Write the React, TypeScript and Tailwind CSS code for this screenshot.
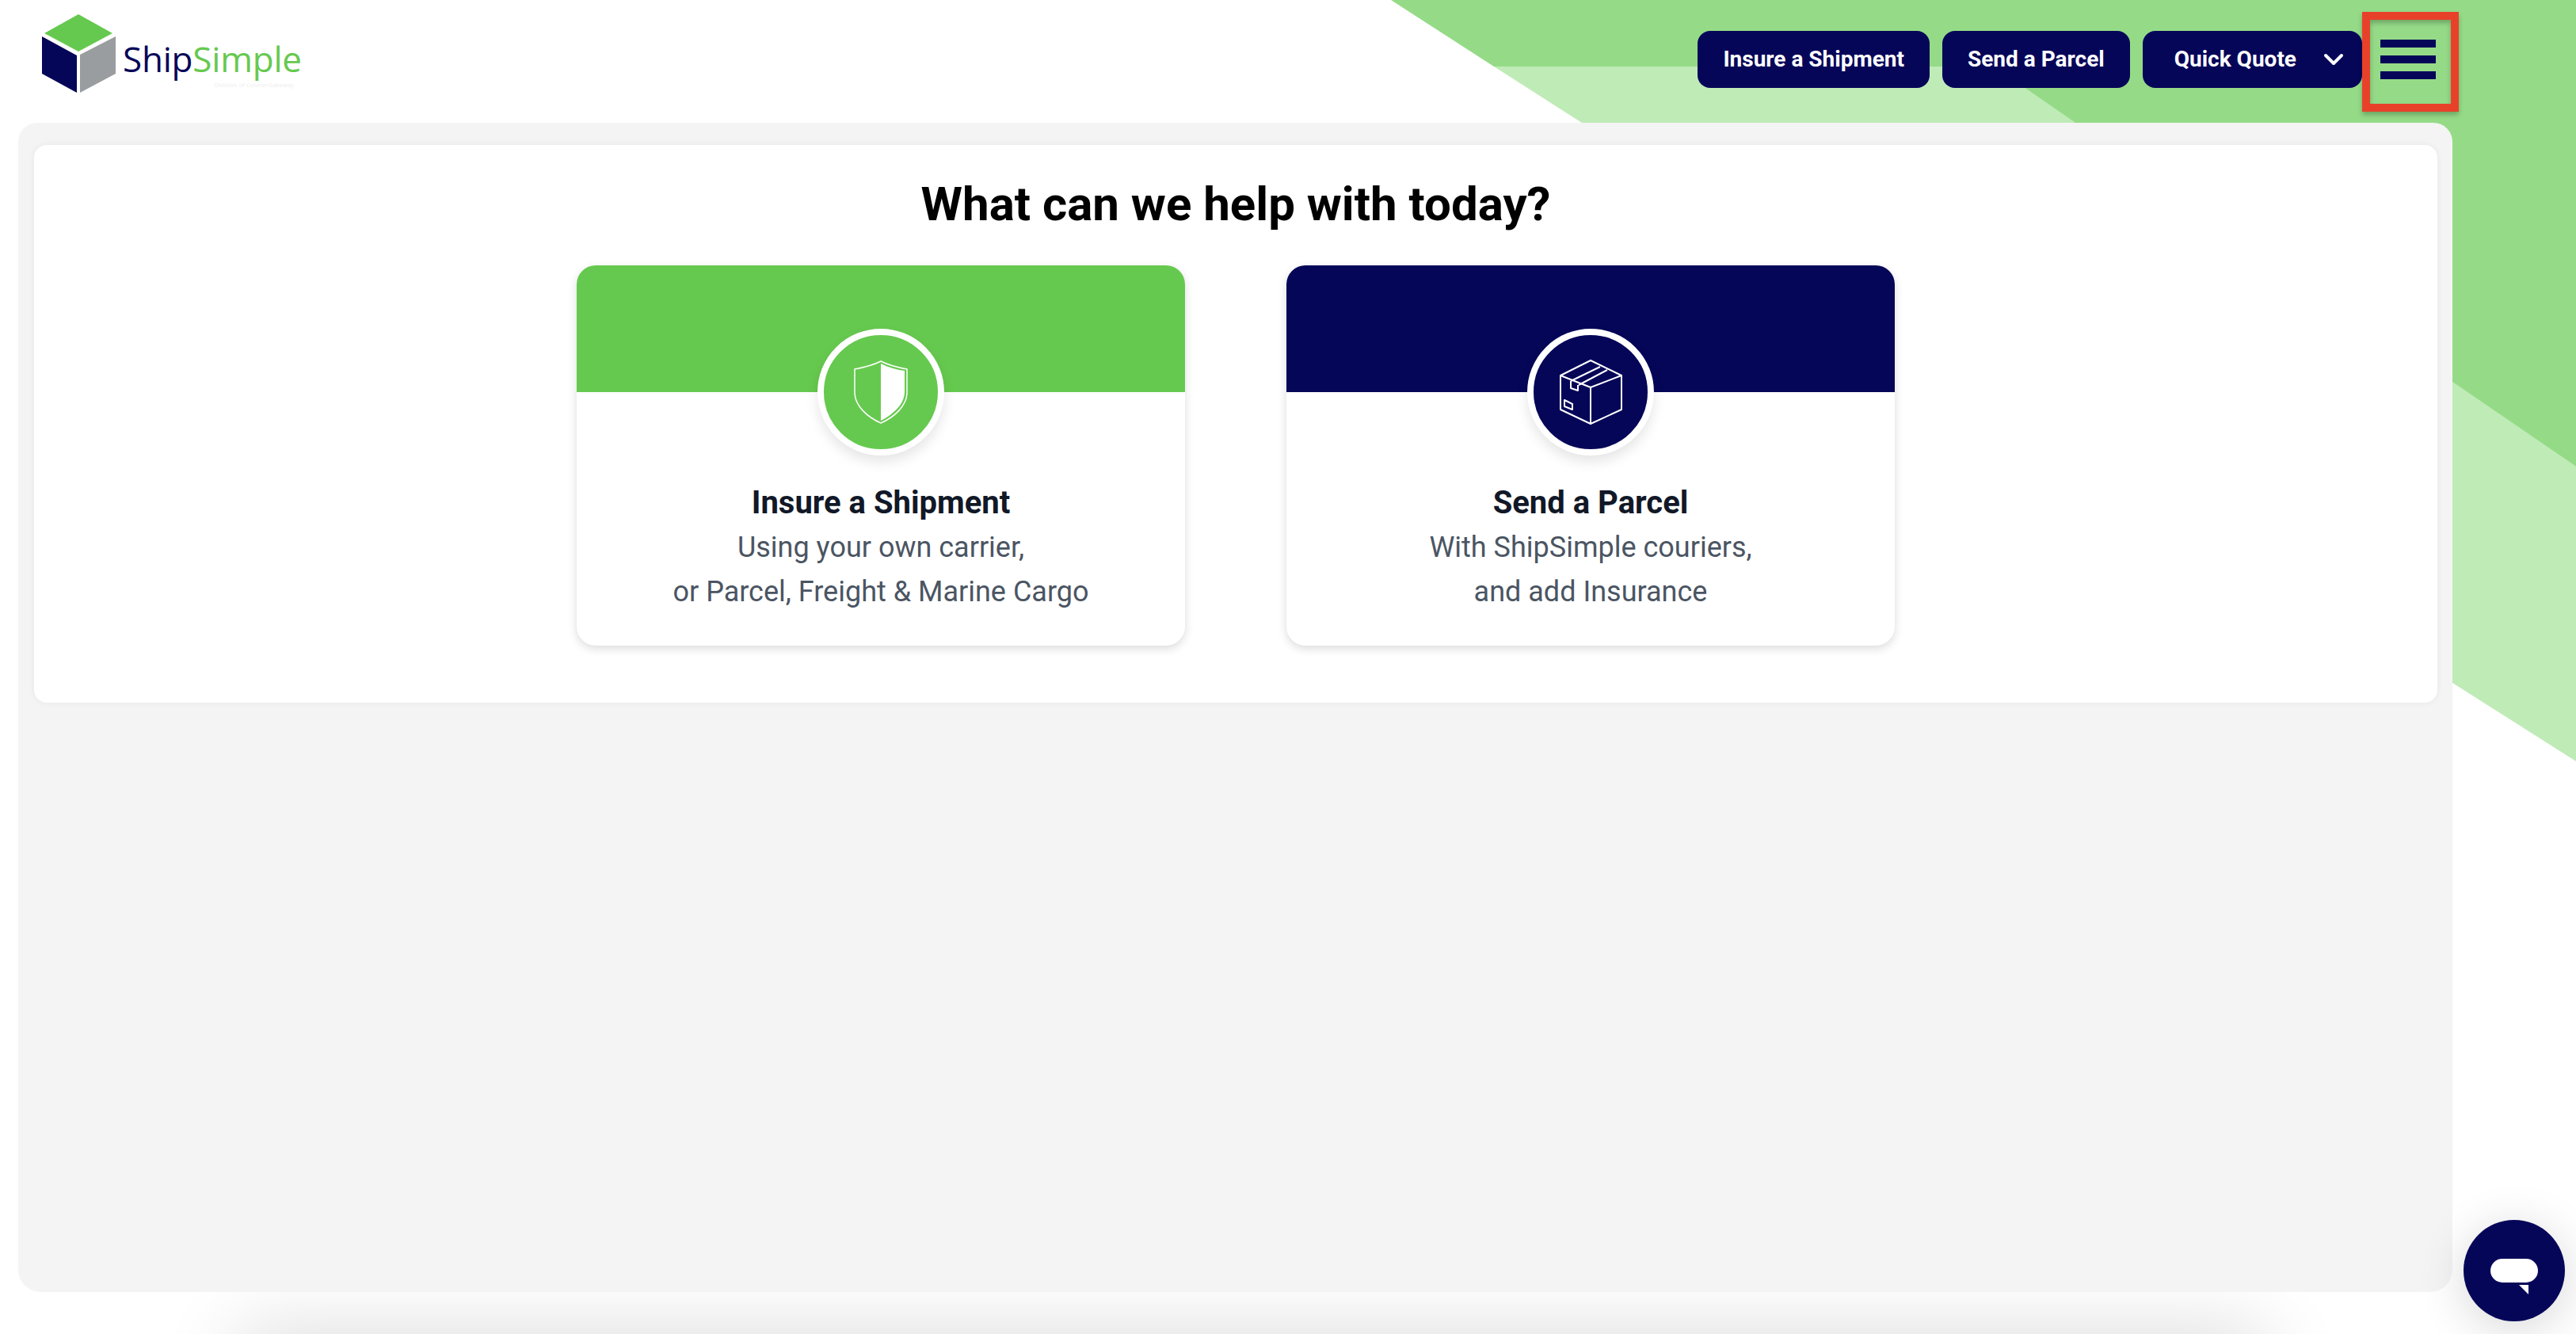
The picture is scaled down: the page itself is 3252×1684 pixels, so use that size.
import { ChevronDown } from "lucide-react";

const navy = "#060659";

function Logo() {
  return (
    <div className="relative w-[400px] h-[130px] shrink-0">
      <svg width="160" height="130" viewBox="0 0 160 130" className="absolute left-0 top-0">
        <polygon points="99,18 142,42 99,65 56,42" fill="#66c94f" />
        <polygon points="53,46 97,70 97,117 53,93" fill="#060659" />
        <polygon points="101,69 146,46 146,93 101,117" fill="#9a9da0" />
      </svg>
      <div className="absolute left-[155px] top-[46px] text-[44px] leading-[56px] font-medium font-['Open_Sans',sans-serif] tracking-[-0.2px]">
        <span className="text-[#060659]">Ship</span>
        <span className="text-[#66c94f]">Simple</span>
      </div>
      <div className="absolute left-[270px] top-[102px] text-[8px] leading-[10px] text-[#eeeeee] font-['Open_Sans',sans-serif] whitespace-nowrap">
        Division of CourierGateway
      </div>
    </div>
  );
}

function NavButton({ label }: { label: string }) {
  return (
    <button className="h-[72px] px-[32px] rounded-2xl bg-[#060659] text-white text-[28px] font-bold flex items-center whitespace-nowrap">
      {label}
    </button>
  );
}

function ShieldIcon() {
  return (
    <svg width="68" height="80" viewBox="0 0 68 80" fill="none">
      <path d="M34 1 C24 6 12 9 1 11 V40 C1 58 18 72 34 79 C50 72 67 58 67 40 V11 C56 9 44 6 34 1 Z" stroke="white" strokeWidth="1.5" />
      <path d="M34 4 C44 9 55 12 64 13 V40 C64 56 48 69 34 76 Z" fill="white" />
    </svg>
  );
}

function BoxIcon() {
  return (
    <svg width="80" height="82" viewBox="0 0 80 82" fill="none" stroke="white" strokeWidth="2" strokeLinejoin="round">
      <path d="M40 1 L79 20 V63 L40 81 L2 63 V20 Z" />
      <path d="M2 20 L40 35 L79 20" />
      <path d="M40 35 V81" />
      <path d="M15 27 L52 9 M25 32 L61 13" />
      <path d="M15 27 V36 L24 39 V32" />
      <path d="M7 51 L17 56 V63 L7 59 Z" />
    </svg>
  );
}

function OptionCard({ color, icon, title, lines }: { color: string; icon: React.ReactNode; title: string; lines: string[] }) {
  return (
    <div className="relative w-[768px] h-[480px] rounded-3xl bg-white shadow-[0_4px_12px_rgba(0,0,0,0.14)] overflow-hidden flex flex-col items-center">
      <div className="w-full h-[160px] shrink-0" style={{ backgroundColor: color }} />
      <div
        className="w-[160px] h-[160px] mt-[-80px] rounded-full border-[8px] border-white flex items-center justify-center shadow-[0_8px_16px_rgba(0,0,0,0.1)]"
        style={{ backgroundColor: color }}
      >
        {icon}
      </div>
      <h2 className="mt-[32px] text-[40px] leading-[56px] font-bold text-[#111827]">{title}</h2>
      {lines.map((l) => (
        <p key={l} className="text-[36px] leading-[56px] text-[#4b5563]">{l}</p>
      ))}
    </div>
  );
}

export default function App() {
  return (
    <div className="relative w-[3252px] h-[1684px] overflow-hidden bg-white font-['Roboto',sans-serif]">
      {/* background shapes behind everything */}
      <svg className="absolute inset-0" width="3252" height="1684" viewBox="0 0 3252 1684">
        <polygon points="1886,84 2517,84 3252,589 3252,961 3096,862 1997,155" fill="#bfebb7" />
        <polygon points="1756,0 3252,0 3252,589 3096,482 2620,155 2517,84 1886,84" fill="#95db87" />
      </svg>
      <div className="absolute left-[300px] w-[2560px] top-[1690px] h-[60px] shadow-[0_0_100px_0_rgba(0,0,0,0.2)]" />

      <div className="relative">
        <header className="h-[155px] flex items-start justify-between pr-[270px]">
          <Logo />
          <nav className="flex gap-[16px] pt-[39px]">
            <NavButton label="Insure a Shipment" />
            <NavButton label="Send a Parcel" />
            <button className="h-[72px] pl-[40px] pr-[16px] rounded-2xl bg-[#060659] text-white text-[28px] font-bold flex items-center whitespace-nowrap">
              Quick Quote
              <ChevronDown className="w-[40px] h-[40px] ml-[27px]" strokeWidth={2.4} />
            </button>
          </nav>
        </header>

        <main className="ml-[23px] w-[3073px] h-[1476px] rounded-t-[24px] rounded-b-[28px] bg-[#f4f4f4] pl-[20px] pr-[19px] pt-[28px]">
          <section className="h-[704px] rounded-2xl bg-white shadow-[0_0_8px_rgba(0,0,0,0.06)] flex flex-col items-center">
            <h1 className="mt-[35px] text-[60px] leading-[80px] font-bold text-black">What can we help with today?</h1>
            <div className="mt-[37px] flex gap-[128px]">
              <OptionCard color="#66c94f" icon={<ShieldIcon />} title="Insure a Shipment" lines={["Using your own carrier,", "or Parcel, Freight & Marine Cargo"]} />
              <OptionCard color={navy} icon={<BoxIcon />} title="Send a Parcel" lines={["With ShipSimple couriers,", "and add Insurance"]} />
            </div>
          </section>
        </main>
      </div>

      {/* menu button with the red annotation box */}
      <div className="absolute left-[2982px] top-[15px] w-[122px] h-[126px] border-[10px] border-[#e8412a] shadow-[0_4px_6px_rgba(0,0,0,0.25),inset_0_4px_6px_rgba(0,0,0,0.25)] flex flex-col items-start gap-[10px] pt-[25px] pl-[13px]">
        <span className="w-[70px] h-[10px] bg-[#060659]" />
        <span className="w-[70px] h-[10px] bg-[#060659]" />
        <span className="w-[70px] h-[10px] bg-[#060659]" />
      </div>

      {/* chat bubble */}
      <div className="absolute left-[3110px] top-[1540px] w-[128px] h-[128px] rounded-full bg-[#060659] shadow-[0_10px_60px_rgba(0,0,0,0.16)] flex items-center justify-center">
        <span className="w-[60px] h-[30px] rounded-full bg-white" />
        <svg className="absolute left-[70px] top-[82px]" width="12" height="12" viewBox="0 0 12 12">
          <polygon points="0,0 12,0 12,12" fill="white" />
        </svg>
      </div>
    </div>
  );
}
